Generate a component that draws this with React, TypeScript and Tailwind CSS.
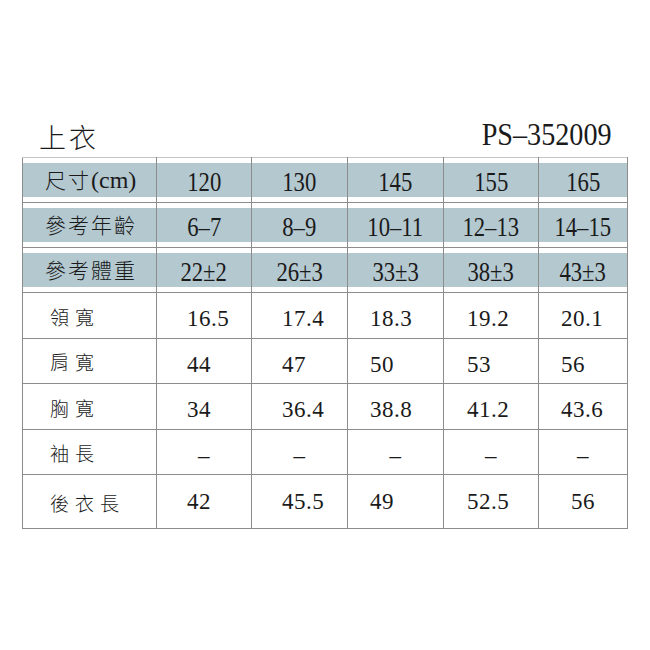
const serif = "font-['Liberation_Serif','Times_New_Roman',serif]";
const cjk = "font-['Noto_Sans_CJK_TC','Noto_Sans_CJK_SC',sans-serif]";

const sizes = ["120", "130", "145", "155", "165"];
const ages = ["6–7", "8–9", "10–11", "12–13", "14–15"];
const weights = ["22±2", "26±3", "33±3", "38±3", "43±3"];

const body = [
  { label: "領寬", values: ["16.5", "17.4", "18.3", "19.2", "20.1"], h: "h-[46px]" },
  { label: "肩寬", values: ["44", "47", "50", "53", "56"], h: "h-[45px]" },
  { label: "胸寬", values: ["34", "36.4", "38.8", "41.2", "43.6"], h: "h-[46px]" },
  { label: "袖長", values: ["–", "–", "–", "–", "–"], h: "h-[45px]" },
  { label: "後衣長", values: ["42", "45.5", "49", "52.5", "56"], h: "h-[54px]" },
];

// left padding of each value column in the body rows
const padLeft = ["pl-[30px]", "pl-[30px]", "pl-[22px]", "pl-[23px]", "pl-[22px]"];

const cell = "border border-[#8c8c8c] p-0";

const HeaderRow = ({ label, values, first }: { label: React.ReactNode; values: string[]; first?: boolean }) => (
  <tr>
    <td className={`${cell} py-[5px] ${first ? "border-t-[#c4c4c4]" : ""}`}>
      <div className={`h-[34px] bg-[#b4c8d0] flex items-center pl-[22px] text-[21px] font-light tracking-[2px] text-[#1a1a1a] ${cjk}`}>
        {label}
      </div>
    </td>
    {values.map((v, i) => (
      <td key={i} className={`${cell} py-[5px] ${first ? "border-t-[#c4c4c4]" : ""}`}>
        <div className="h-[34px] bg-[#b4c8d0] flex items-center justify-center pt-[4px]">
          <span className={`inline-block scale-x-[0.84] text-[27px] leading-none text-[#1a1a1a] ${serif}`}>{v}</span>
        </div>
      </td>
    ))}
  </tr>
);

export default function App() {
  return (
    <div className="w-[650px] h-[650px] bg-white pt-[114px]">
      <div className="flex items-end justify-between pl-[39px] pr-[38px] h-[36px]">
        <span className={`text-[27px] font-light leading-none tracking-[3px] text-[#1a1a1a] ${cjk}`}>上衣</span>
        <span className={`inline-block origin-right scale-x-[0.88] text-[32px] leading-none text-[#1a1a1a] ${serif}`}>
          PS–352009
        </span>
      </div>
      <table className="ml-[22px] mt-[7px] w-[605px] table-fixed border-collapse">
        <colgroup>
          <col className="w-[134px]" />
          <col className="w-[95px]" />
          <col className="w-[96px]" />
          <col className="w-[96px]" />
          <col className="w-[95px]" />
          <col className="w-[89px]" />
        </colgroup>
        <tbody>
          <HeaderRow
            first
            label={
              <>
                尺寸<span className={`text-[24px] tracking-normal ${serif}`}>(cm)</span>
              </>
            }
            values={sizes}
          />
          <HeaderRow label="參考年齡" values={ages} />
          <HeaderRow label="參考體重" values={weights} />
          {body.map((row, r) => (
            <tr key={row.label} className={row.h}>
              <td className={`${cell} pl-[27px] pt-[3px] text-[19px] font-light tracking-[6px] text-[#1a1a1a] ${cjk}`}>{row.label}</td>
              {row.values.map((v, i) => {
                const centered = v === "–" || (r === 4 && i === 4);
                return (
                  <td
                    key={i}
                    className={`${cell} ${centered ? "text-center" : `text-left ${padLeft[i]}`} ${r < 4 ? "pt-[6px]" : ""} text-[23px] leading-none tracking-[0.5px] text-[#1a1a1a] ${serif}`}
                  >
                    {v}
                  </td>
                );
              })}
            </tr>
          ))}
        </tbody>
      </table>
    </div>
  );
}
